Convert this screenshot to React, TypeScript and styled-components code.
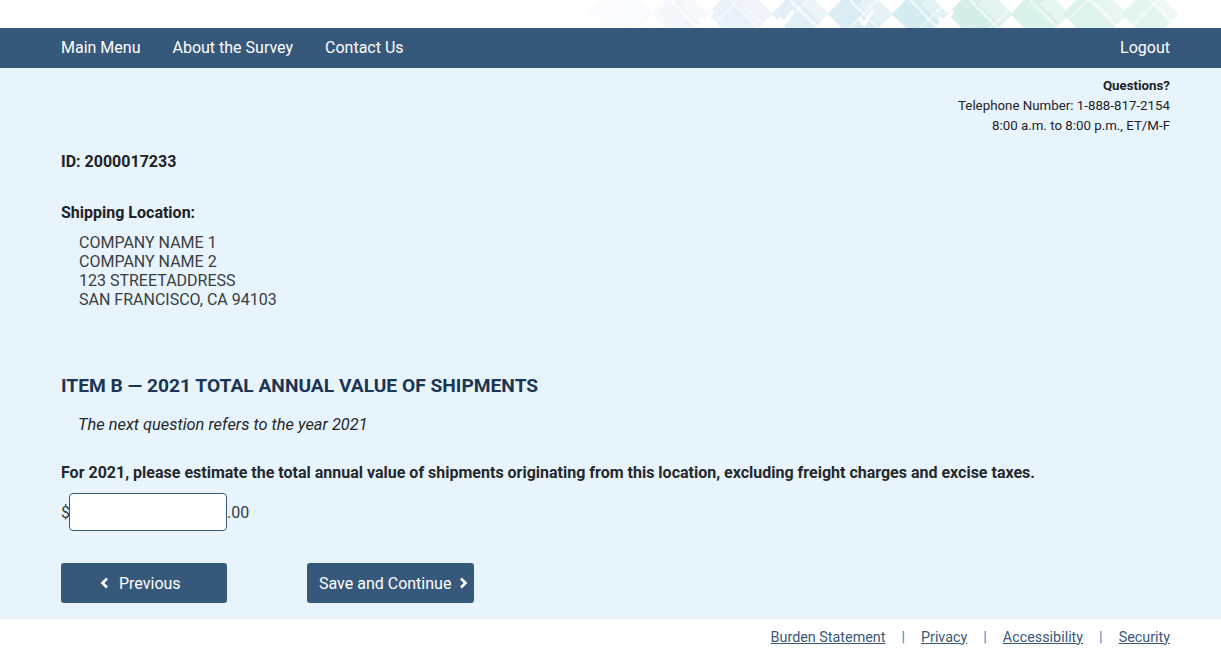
import React from "react";
import styled, { createGlobalStyle } from "styled-components";

const Global = createGlobalStyle`
  html, body { margin: 0; padding: 0; background: #fff; }
  body { font-family: Roboto, "Liberation Sans", Arial, sans-serif; color: #1f2226; }
  * { box-sizing: border-box; }
`;

const Banner = styled.header`
  height: 28px;
  background: #fff;
  position: relative;
  overflow: hidden;
`;

const BannerArt = styled.svg`
  position: absolute;
  left: 540px;
  top: 0;
  width: 660px;
  height: 28px;
`;

const Nav = styled.nav`
  height: 40px;
  background: #36587a;
  display: flex;
  align-items: center;
  padding: 0 51px 0 61px;
`;

const NavLinks = styled.div`
  display: flex;
  gap: 32px;
  flex: 1;
`;

const NavLink = styled.a`
  color: #fff;
  font-size: 16px;
  text-decoration: none;
  line-height: 20px;
`;

const Main = styled.main`
  background: #e7f4fc;
  padding: 8px 51px 16px 61px;
  height: 551px;
`;

const Contact = styled.div`
  text-align: right;
  font-size: 13.3px;
  line-height: 20px;
  color: #1f2226;
`;

const ContactTitle = styled.div`
  font-weight: 700;
`;

const IdLine = styled.div`
  font-weight: 700;
  font-size: 16px;
  line-height: 20px;
  margin-top: 16px;
`;

const Label = styled.div`
  font-weight: 700;
  font-size: 16px;
  line-height: 20px;
  margin-top: 31px;
`;

const Address = styled.div`
  margin: 10px 0 0 18px;
  font-size: 16px;
  line-height: 19px;
  color: #3a3d42;
`;

const Heading = styled.h2`
  margin: 65px 0 0;
  font-size: 19.2px;
  line-height: 24px;
  font-weight: 700;
  color: #1c3553;
`;

const Note = styled.p`
  margin: 17px 0 0 17px;
  font-size: 16.4px;
  line-height: 20px;
  font-style: italic;
  color: #25282c;
`;

const Question = styled.p`
  margin: 28px 0 0;
  font-size: 16px;
  line-height: 20px;
  font-weight: 700;
  color: #25282c;
`;

const AmountRow = styled.div`
  display: flex;
  align-items: center;
  margin-top: 10px;
  font-size: 16px;
  color: #3a3d42;
`;

const Dollar = styled.span`
  width: 8px;
`;

const Input = styled.input`
  width: 158px;
  height: 38px;
  border: 1px solid #36587a;
  border-radius: 4px;
  background: #fff;
  font-size: 16px;
  padding: 0 8px;
  font-family: inherit;
  outline: none;
`;

const Buttons = styled.div`
  display: flex;
  gap: 80px;
  margin-top: 32px;
`;

const Button = styled.button<{ $w: number; $pl: number; $gap: number }>`
  width: ${(p) => p.$w}px;
  height: 40px;
  background: #36587a;
  color: #fff;
  border: none;
  border-radius: 3px;
  font-family: inherit;
  font-size: 16px;
  display: flex;
  align-items: center;
  justify-content: flex-start;
  gap: ${(p) => p.$gap}px;
  padding: 0 0 0 ${(p) => p.$pl}px;
`;

const Footer = styled.footer`
  display: flex;
  justify-content: flex-end;
  align-items: center;
  gap: 16px;
  height: 36px;
  padding-right: 51px;
  font-size: 14.35px;
`;

const FootLink = styled.a`
  color: #3b5877;
  text-decoration: underline;
`;

const Sep = styled.span`
  color: #2b8ed2;
`;

const Chevron = ({ dir }: { dir: "left" | "right" }) => (
  <svg width="9" height="12" viewBox="0 0 9 12">
    <path
      d={dir === "left" ? "M7 1.5 L2.5 6 L7 10.5" : "M2 1.5 L6.5 6 L2 10.5"}
      fill="none"
      stroke="#fff"
      strokeWidth="2.6"
      strokeLinejoin="miter"
    />
  </svg>
);

const tiles = [
  { x: 80, s: 46, c: "#e6eef9" },
  { x: 140, s: 40, c: "#e0eaf7" },
  { x: 200, s: 46, c: "#d8e6f5" },
  { x: 260, s: 40, c: "#cfe4f1" },
  { x: 320, s: 46, c: "#c5e2ed" },
  { x: 380, s: 40, c: "#bde2e8" },
  { x: 440, s: 46, c: "#c0e6e0" },
  { x: 500, s: 42, c: "#c8ebe1" },
  { x: 555, s: 46, c: "#d2efe6" },
  { x: 610, s: 40, c: "#d9f1ea" },
];

const checks = [160, 240, 320, 400];

export default function App() {
  return (
    <>
      <Global />
      <Banner>
        <BannerArt viewBox="0 0 660 28">
          <defs>
            <linearGradient id="fade" x1="0" x2="1" y1="0" y2="0">
              <stop offset="0" stopColor="#fff" stopOpacity="1" />
              <stop offset="0.3" stopColor="#fff" stopOpacity="0.25" />
              <stop offset="0.9" stopColor="#fff" stopOpacity="0" />
            </linearGradient>
          </defs>
          {tiles.map((t, i) => (
            <g key={i}>
              <rect
                x={t.x - t.s / 2}
                y={14 - t.s / 2}
                width={t.s}
                height={t.s}
                fill={t.c}
                opacity={0.75}
                transform={`rotate(45 ${t.x} 14)`}
              />
              <rect
                x={t.x + 20 - t.s / 3}
                y={4 - t.s / 3}
                width={(t.s * 2) / 3}
                height={(t.s * 2) / 3}
                fill="#ffffff"
                opacity={0.35}
                transform={`rotate(45 ${t.x + 20} 4)`}
              />
            </g>
          ))}
          {[70, 130, 190, 250, 310, 370, 430, 490, 550, 610].map((x, i) => (
            <line key={i} x1={x} y1={0} x2={x + 28} y2={28} stroke="#fff" strokeWidth="3" opacity="0.55" />
          ))}
          {[100, 170, 240, 310, 380, 450, 520, 590].map((x, i) => (
            <line key={`b${i}`} x1={x} y1={28} x2={x + 28} y2={0} stroke="#fff" strokeWidth="2" opacity="0.5" />
          ))}
          {checks.map((x, i) => (
            <path
              key={i}
              d={`M${x} 19 l4 5 l8 -12`}
              stroke="#fff"
              strokeWidth="4"
              strokeLinecap="round"
              fill="none"
              opacity="0.9"
            />
          ))}
          <rect x="0" y="0" width="660" height="28" fill="url(#fade)" />
        </BannerArt>
      </Banner>
      <Nav>
        <NavLinks>
          <NavLink href="#">Main Menu</NavLink>
          <NavLink href="#">About the Survey</NavLink>
          <NavLink href="#">Contact Us</NavLink>
        </NavLinks>
        <NavLink href="#">Logout</NavLink>
      </Nav>
      <Main>
        <Contact>
          <ContactTitle>Questions?</ContactTitle>
          <div>Telephone Number: 1-888-817-2154</div>
          <div>8:00 a.m. to 8:00 p.m., ET/M-F</div>
        </Contact>
        <IdLine>ID: 2000017233</IdLine>
        <Label>Shipping Location:</Label>
        <Address>
          <div>COMPANY NAME 1</div>
          <div>COMPANY NAME 2</div>
          <div>123 STREETADDRESS</div>
          <div>SAN FRANCISCO, CA 94103</div>
        </Address>
        <Heading>ITEM B — 2021 TOTAL ANNUAL VALUE OF SHIPMENTS</Heading>
        <Note>The next question refers to the year 2021</Note>
        <Question>
          For 2021, please estimate the total annual value of shipments originating from this location, excluding freight charges and excise taxes.
        </Question>
        <AmountRow>
          <Dollar>$</Dollar>
          <Input aria-label="Total annual value" />
          <span>.00</span>
        </AmountRow>
        <Buttons>
          <Button $w={166} $pl={39} $gap={10}>
            <Chevron dir="left" />
            Previous
          </Button>
          <Button $w={167} $pl={12} $gap={8}>
            Save and Continue
            <Chevron dir="right" />
          </Button>
        </Buttons>
      </Main>
      <Footer>
        <FootLink href="#">Burden Statement</FootLink>
        <Sep>|</Sep>
        <FootLink href="#">Privacy</FootLink>
        <Sep>|</Sep>
        <FootLink href="#">Accessibility</FootLink>
        <Sep>|</Sep>
        <FootLink href="#">Security</FootLink>
      </Footer>
    </>
  );
}
